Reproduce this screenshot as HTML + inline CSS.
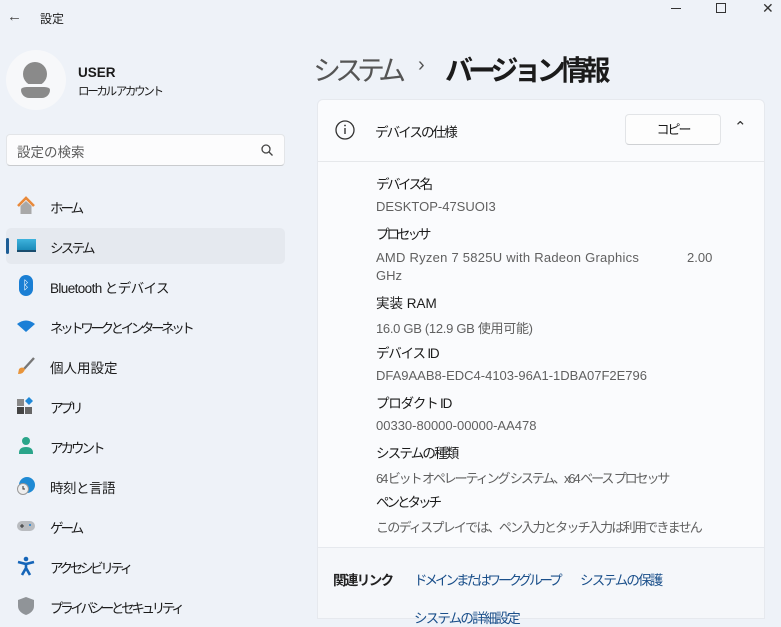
<!DOCTYPE html>
<html><head><meta charset="utf-8"><style>
*{margin:0;padding:0;box-sizing:border-box}
body{width:781px;height:619px;overflow:hidden;background:#eef2f8;font-family:"Liberation Sans","Noto Sans CJK JP",sans-serif;color:#1b1b1b;position:relative;font-size:13px}
.a{position:absolute;white-space:nowrap}
.nav{position:absolute;left:6px;width:279px;height:36px;border-radius:5px}
.nav .ic{position:absolute;left:10px;top:8px;width:20px;height:20px}
.nav .t{position:absolute;left:44px;top:9px;font-size:13.5px;letter-spacing:-3px}
.card{position:absolute;left:317px;top:99px;width:448px;height:449px;background:#fafbfd;border:1px solid #e6e9ee;border-radius:6px 6px 0 0}
.lbl{position:absolute;left:58px;font-size:13.5px;color:#1b1b1b;white-space:nowrap}
.val{position:absolute;left:58px;font-size:13px;color:#606060;white-space:nowrap}
.lnk{color:#1a4f8a;font-size:13.5px}
</style></head><body>
<div class="a" style="left:7px;top:8px;font-size:15px;color:#444">←</div>
<div class="a" style="left:40px;top:10px;font-size:12px">設定</div>
<div class="a" style="left:671px;top:8px;width:10px;height:1px;background:#333"></div>
<div class="a" style="left:716px;top:3px;width:10px;height:10px;border:1.3px solid #333"></div>
<div class="a" style="left:762px;top:0;font-size:14px;color:#333">✕</div>

<div class="a" style="left:6px;top:50px;width:60px;height:60px;border-radius:50%;background:#f7f8fa"></div>
<div class="a" style="left:23px;top:62px;width:24px;height:24px;border-radius:50%;background:#8a8a8a"></div>
<div class="a" style="left:21px;top:84px;width:29px;height:14px;border-radius:7px 7px 10px 10px;background:#8a8a8a;border-top:3px solid #f7f8fa"></div>
<div class="a" style="left:78px;top:65px;font-size:13.5px;font-weight:bold">USER</div>
<div class="a" style="left:78px;top:83px;font-size:11.5px;letter-spacing:-2.3px">ローカル アカウント</div>

<div class="a" style="left:6px;top:134px;width:279px;height:32px;background:#fcfcfd;border:1px solid #e3e5e8;border-bottom:1px solid #c9cbce;border-radius:4px"></div>
<div class="a" style="left:17px;top:141px;font-size:13.5px;color:#5c5c5c">設定の検索</div>
<svg class="a" style="left:260px;top:143px" width="14" height="14"><circle cx="6" cy="6" r="4" stroke="#444" stroke-width="1.3" fill="none"/><path d="M9 9l3.5 3.5" stroke="#444" stroke-width="1.3"/></svg>

<div class="nav" style="top:188px"><svg class="ic" viewBox="0 0 20 20"><path d="M2 10L10 2l8 8" stroke="#e8893a" stroke-width="2.6" fill="none"/><path d="M4.5 10v8h11v-8L10 5z" fill="#a8a8a8"/></svg><div class="t">ホーム</div></div>
<div class="nav" style="top:228px;background:#e5e9ef"><div class="a" style="left:0;top:10px;width:3px;height:16px;background:#1d5d95;border-radius:2px"></div><div class="ic" style="left:11px;top:11px;width:19px;height:13px;background:linear-gradient(#3eb3dd,#1a8ab8);border-bottom:2px solid #1a4d6e"></div><div class="t" style="letter-spacing:-2.7px">システム</div></div>
<div class="nav" style="top:268px"><div class="ic" style="left:13px;top:7px;width:14px;height:21px;border-radius:7px;background:#1a7fd4;color:#fff;font-size:12px;text-align:center;line-height:21px">ᛒ</div><div class="t" style="letter-spacing:-0.6px">Bluetooth とデバイス</div></div>
<div class="nav" style="top:308px"><svg class="ic" viewBox="0 0 20 20"><path d="M1 8q9-7 18 0l-9 8z" fill="#1b7fd6"/></svg><div class="t" style="letter-spacing:-3.4px">ネットワークとインターネット</div></div>
<div class="nav" style="top:348px"><svg class="ic" viewBox="0 0 20 20"><path d="M18 2L8 13" stroke="#777" stroke-width="2.4"/><path d="M3 13q3-3 6 0q-1 5-7 5z" fill="#e8943a"/></svg><div class="t" style="letter-spacing:0">個人用設定</div></div>
<div class="nav" style="top:388px"><svg class="ic" viewBox="0 0 20 20"><rect x="1" y="3" width="7" height="7" fill="#888"/><rect x="1" y="11" width="7" height="7" fill="#444"/><rect x="9" y="11" width="7" height="7" fill="#666"/><path d="M13 1l4 4-4 4-4-4z" fill="#1e88d8"/></svg><div class="t" style="letter-spacing:-3.5px">アプリ</div></div>
<div class="nav" style="top:428px"><svg class="ic" viewBox="0 0 20 20"><circle cx="10" cy="5" r="4" fill="#2aa58a"/><path d="M3 17q0-6 7-6t7 6v1H3z" fill="#2aa58a"/></svg><div class="t">アカウント</div></div>
<div class="nav" style="top:468px"><svg class="ic" viewBox="0 0 20 20"><circle cx="11" cy="9" r="8" fill="#1f8ad4"/><circle cx="7" cy="13" r="5.5" fill="#eee" stroke="#999"/><path d="M7 10v3h2" stroke="#333" fill="none"/></svg><div class="t" style="letter-spacing:-0.5px">時刻と言語</div></div>
<div class="nav" style="top:508px"><svg class="ic" viewBox="0 0 20 20"><rect x="1" y="5" width="18" height="10" rx="5" fill="#b9bcc0"/><path d="M4 10h4M6 8v4" stroke="#333"/><circle cx="14" cy="9" r="1" fill="#1e7fd0"/></svg><div class="t">ゲーム</div></div>
<div class="nav" style="top:548px"><svg class="ic" viewBox="0 0 20 20"><circle cx="10" cy="3" r="2.3" fill="#1565b8"/><path d="M2 6l8 2 8-2M10 8v4l-4 7M10 12l4 7" stroke="#1565b8" stroke-width="2.6" fill="none"/></svg><div class="t" style="letter-spacing:-3.3px">アクセシビリティ</div></div>
<div class="nav" style="top:588px"><svg class="ic" viewBox="0 0 20 20"><path d="M10 1l8 3v6q0 6-8 9q-8-3-8-9V4z" fill="#909498"/></svg><div class="t" style="letter-spacing:-3.3px">プライバシーとセキュリティ</div></div>

<div class="a" style="left:313px;top:49px;font-size:28px;color:#555;letter-spacing:-6px">システム</div>
<div class="a" style="left:418px;top:54px;font-size:20px;color:#555">›</div>
<div class="a" style="left:445px;top:49px;font-size:28px;font-weight:bold;color:#1b1b1b;letter-spacing:-5px">バージョン情報</div>

<div class="card">
<svg class="a" style="left:16px;top:19px" width="22" height="22"><circle cx="11" cy="11" r="9" stroke="#333" stroke-width="1.3" fill="none"/><path d="M11 9v6" stroke="#333" stroke-width="1.4"/><circle cx="11" cy="6.5" r="0.9" fill="#333"/></svg>
<div class="a" style="left:57px;top:21px;font-size:13.5px;letter-spacing:-1.9px">デバイスの仕様</div>
<div class="a" style="left:307px;top:14px;width:96px;height:31px;background:#fdfdfd;border:1px solid #e2e4e7;border-bottom-color:#cfd1d4;border-radius:4px;text-align:center;line-height:29px;font-size:13px;letter-spacing:-2px">コピー</div>
<div class="a" style="left:416px;top:18px;font-size:15px;color:#333">⌃</div>
<div class="a" style="left:0;top:61px;width:446px;height:1px;background:#e6e8eb"></div>
<div class="lbl" style="top:73px;letter-spacing:-2.5px">デバイス名</div>
<div class="val" style="top:99px">DESKTOP-47SUOI3</div>
<div class="lbl" style="top:123px;letter-spacing:-3px">プロセッサ</div>
<div class="val" style="top:150px;letter-spacing:0.25px">AMD Ryzen 7 5825U with Radeon Graphics</div>
<div class="val" style="top:150px;left:369px">2.00</div>
<div class="val" style="top:168px">GHz</div>
<div class="lbl" style="top:192px">実装 RAM</div>
<div class="val" style="top:218px;letter-spacing:-0.3px">16.0 GB (12.9 GB 使用可能)</div>
<div class="lbl" style="top:242px;letter-spacing:-1.2px">デバイス ID</div>
<div class="val" style="top:268px">DFA9AAB8-EDC4-4103-96A1-1DBA07F2E796</div>
<div class="lbl" style="top:292px;letter-spacing:-1.2px">プロダクト ID</div>
<div class="val" style="top:318px">00330-80000-00000-AA478</div>
<div class="lbl" style="top:342px;letter-spacing:-1.8px">システムの種類</div>
<div class="val" style="top:368px;letter-spacing:-2.1px">64 ビット オペレーティング システム、x64 ベース プロセッサ</div>
<div class="lbl" style="top:391px;letter-spacing:-3px">ペンとタッチ</div>
<div class="val" style="top:417px;letter-spacing:-1.75px">このディスプレイでは、ペン入力とタッチ入力は利用できません</div>
</div>
<div class="a" style="left:317px;top:548px;width:448px;height:71px;background:#f5f7fa;border:1px solid #e6e9ee;border-top:none"></div>
<div class="a" style="left:333px;top:569px;font-size:13.5px;font-weight:bold;color:#222;letter-spacing:-1.6px">関連リンク</div>
<div class="a lnk" style="left:414px;top:569px;letter-spacing:-3px">ドメインまたはワークグループ</div>
<div class="a lnk" style="left:580px;top:569px;letter-spacing:-1.8px">システムの保護</div>
<div class="a lnk" style="left:414px;top:607px;letter-spacing:-1.8px">システムの詳細設定</div>
</body></html>
